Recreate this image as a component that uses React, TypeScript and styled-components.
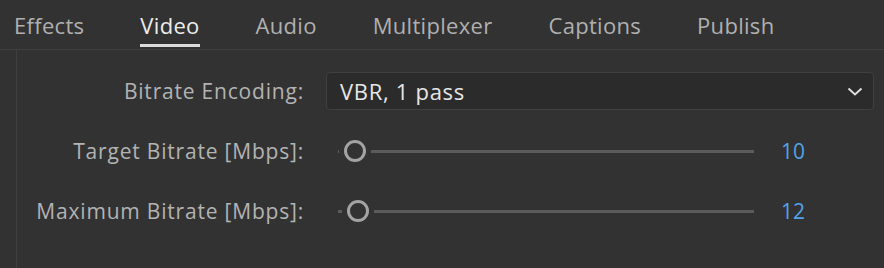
import React from "react";
import styled, { createGlobalStyle } from "styled-components";

const Global = createGlobalStyle`
  html, body { margin: 0; padding: 0; background: #323232; }
  body { font-family: "Open Sans", "Liberation Sans", sans-serif; -webkit-font-smoothing: antialiased; }
`;

const Page = styled.div`
  width: 884px;
  height: 268px;
  background: #323232;
  display: flex;
  flex-direction: column;
  overflow: hidden;
`;

const TabBar = styled.div`
  display: flex;
  gap: 56px;
  padding-left: 14px;
  height: 50px;
  border-bottom: 1px solid #3f3f3f;
  box-sizing: border-box;
`;

const Tab = styled.div<{ $active?: boolean }>`
  position: relative;
  font-size: 22px;
  letter-spacing: 0.3px;
  line-height: 50px;
  white-space: nowrap;
  color: ${(p) => (p.$active ? "#ececec" : "#b0b0b0")};
  &::after {
    content: "";
    display: ${(p) => (p.$active ? "block" : "none")};
    position: absolute;
    left: 0;
    right: 0;
    top: 44px;
    height: 3px;
    background: #dcdcdc;
  }
`;

const Body = styled.div`
  flex: 1;
  margin-left: 16px;
  border-left: 1px solid #3f3f3f;
  display: grid;
  grid-template-columns: 287px 548px;
  column-gap: 22px;
  row-gap: 22px;
  align-content: start;
  padding-top: 22px;
`;

const Label = styled.div`
  font-size: 21px;
  letter-spacing: 0.8px;
  color: #b3b3b3;
  text-align: right;
  height: 38px;
  line-height: 38px;
  white-space: nowrap;
`;

const Select = styled.div`
  height: 38px;
  box-sizing: border-box;
  border: 1px solid #404040;
  border-radius: 4px;
  background: #2b2b2b;
  display: flex;
  align-items: center;
  justify-content: space-between;
  padding: 0 10px 0 13px;
  font-size: 22px;
  letter-spacing: 0.7px;
  color: #e6e6e6;
`;

const SliderRow = styled.div`
  display: flex;
  align-items: center;
  height: 38px;
  padding-left: 12px;
`;

const Track = styled.div`
  position: relative;
  width: 416px;
  height: 3px;
  background: #5b5b5b;
`;

const Knob = styled.div`
  position: absolute;
  top: 50%;
  width: 22px;
  height: 22px;
  box-sizing: border-box;
  border: 3.5px solid #a3a3a3;
  border-radius: 50%;
  background: #323232;
  box-shadow: 0 0 0 5px #323232;
  transform: translate(-50%, -50%);
`;

const Value = styled.div`
  margin-left: 27px;
  font-size: 21px;
  color: #52a2ea;
`;

function Slider({ pos, value }: { pos: number; value: string }) {
  return (
    <SliderRow>
      <Track>
        <Knob style={{ left: pos }} />
      </Track>
      <Value>{value}</Value>
    </SliderRow>
  );
}

export default function App() {
  const tabs = ["Effects", "Video", "Audio", "Multiplexer", "Captions", "Publish"];
  return (
    <Page>
      <Global />
      <TabBar>
        {tabs.map((t) => (
          <Tab key={t} $active={t === "Video"}>
            {t}
          </Tab>
        ))}
      </TabBar>
      <Body>
        <Label>Bitrate Encoding:</Label>
        <Select>
          <span>VBR, 1 pass</span>
          <svg width="16" height="9" viewBox="0 0 16 9">
            <path d="M1.5 1.5l6.5 6L14.5 1.5" fill="none" stroke="#dedede" strokeWidth="2" />
          </svg>
        </Select>
        <Label>Target Bitrate [Mbps]:</Label>
        <Slider pos={17} value="10" />
        <Label>Maximum Bitrate [Mbps]:</Label>
        <Slider pos={20} value="12" />
      </Body>
    </Page>
  );
}
